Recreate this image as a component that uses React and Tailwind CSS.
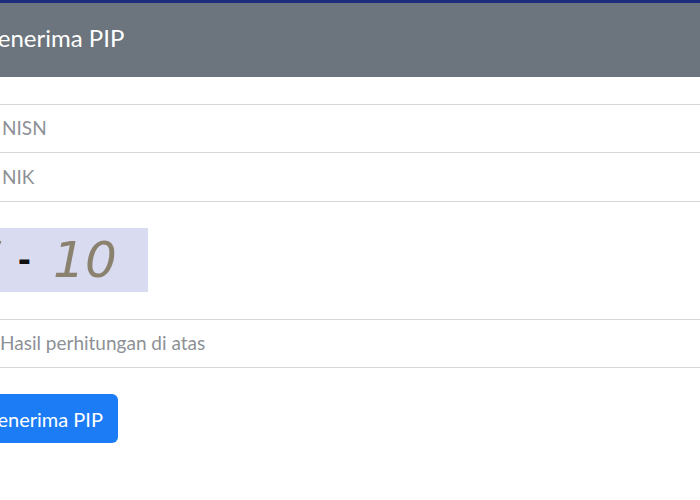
export default function App() {
  return (
    <div className="w-[700px] h-[500px] overflow-hidden bg-white" style={{ fontFamily: "Lato, 'Noto Sans', sans-serif" }}>
      <div className="h-[3px] bg-[#1c2d7e]" />
      <div className="h-[74px] bg-[#6c757d] flex items-center">
        <div className="-ml-[16px] text-white text-[24px] leading-none pb-[4px]">Penerima PIP</div>
      </div>
      <div className="-ml-[12px] w-[740px] pt-[27px]">
        <div className="flex flex-col">
          <div className="h-[49px] border border-[#d4d6d9] flex items-center pl-[13px] text-[19px] text-[#8d9196]">NISN</div>
          <div className="h-[49px] border border-t-0 border-[#d4d6d9] flex items-center pl-[13px] text-[19px] text-[#8d9196]">NIK</div>
        </div>
        <div className="mt-[26px] -ml-[48px] w-[208px] h-[64px] bg-[#d9dcf0] flex items-center pl-[30px] italic text-[50px] leading-none" style={{ fontFamily: "'DejaVu Sans', sans-serif" }}>
          <span className="text-[#8a816e]">7</span>
          <span className="ml-[16px] text-[#111] not-italic font-bold text-[32px]">-</span>
          <span className="ml-[22px] text-[#8a816e]">10</span>
        </div>
        <div className="mt-[27px] h-[49px] border border-[#d4d6d9] flex items-center pl-[11px] text-[19px] text-[#8d9196]">Hasil perhitungan di atas</div>
        <div className="mt-[26px] flex">
          <div className="-ml-[12px] h-[49px] w-[142px] rounded-[6px] bg-[#1b7cf6] flex items-center pl-[10px] text-white text-[20px]">Penerima PIP</div>
        </div>
        <div className="mt-[53px] text-[18px] text-[#888] pl-[60px]">Masukkan NISN dan NIK siswa untuk mengecek status penerima PIP</div>
      </div>
    </div>
  );
}
